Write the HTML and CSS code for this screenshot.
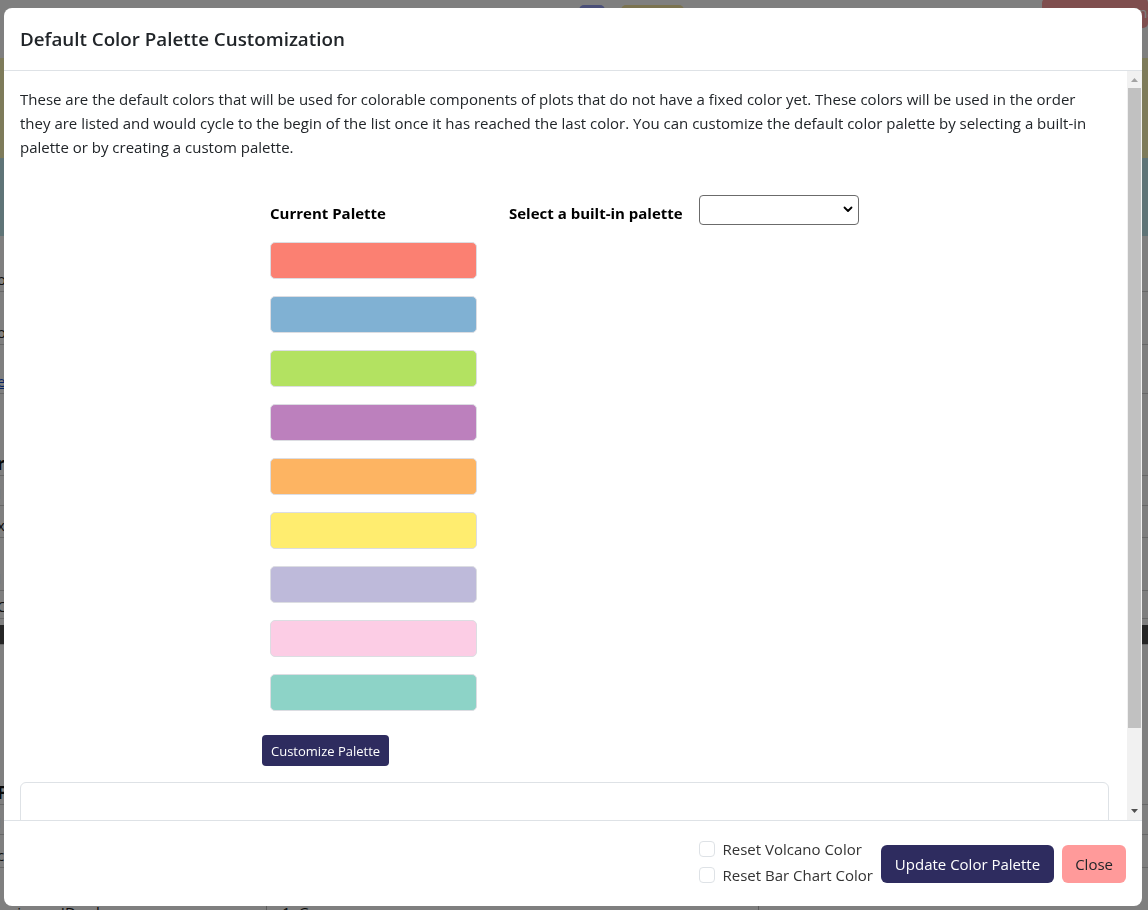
FILE: index.html
```html
<!DOCTYPE html>
<html lang="en">
<head>
<meta charset="utf-8">
<title>Default Color Palette Customization</title>
<link rel="stylesheet" href="styles.css">
</head>
<body>
<div class="page">
  <div class="page-top">
    <span class="pill pill-blue"></span>
    <span class="pill pill-tan"></span>
    <span class="pill pill-red">Formatting Enabled</span>
  </div>
  <div class="band band-tan"></div>
  <div class="band band-teal"></div>
  <div class="page-rows">
    <div class="prow">o</div>
    <div class="prow">o</div>
    <div class="prow link">e</div>
    <div class="prow bold">r</div>
    <div class="prow orange">I</div>
    <div class="prow">x</div>
    <div class="prow orange">I</div>
    <div class="prow">C</div>
    <div class="prow dark"></div>
    <div class="prow bold">F</div>
    <div class="prow orange">I</div>
    <div class="prow">c</div>
  </div>
  <div class="page-last">
    <span class="cell-a">primary ID column</span>
    <span class="cell-b">1. Gene</span>
    <span class="cell-c"></span>
  </div>
</div>

<div class="backdrop"></div>

<div class="modal">
  <div class="modal-content">
    <div class="modal-header">
      <h5 class="modal-title">Default Color Palette Customization</h5>
    </div>
    <div class="modal-body">
      <div class="body-scroll">
        <p class="intro">These are the default colors that will be used for colorable components of plots that do not have a fixed color yet. These colors will be used in the order they are listed and would cycle to the begin of the list once it has reached the last color. You can customize the default color palette by selecting a built-in palette or by creating a custom palette.</p>

        <div class="palette-row">
          <div class="current-col">
            <div class="col-label">Current Palette</div>
            <div class="swatches">
              <div class="swatch" style="background:#fb8072"></div>
              <div class="swatch" style="background:#80b1d3"></div>
              <div class="swatch" style="background:#b3e261"></div>
              <div class="swatch" style="background:#bc80bd"></div>
              <div class="swatch" style="background:#fdb462"></div>
              <div class="swatch" style="background:#ffed6f"></div>
              <div class="swatch" style="background:#bebada"></div>
              <div class="swatch" style="background:#fccde5"></div>
              <div class="swatch" style="background:#8dd3c7"></div>
            </div>
            <button class="btn-customize" type="button">Customize Palette</button>
          </div>
          <div class="builtin-col">
            <label class="col-label" for="builtin">Select a built-in palette</label>
            <div class="select-wrap">
              <select id="builtin" class="select"><option></option></select>
              <svg class="chev" width="10" height="7" viewBox="0 0 10 7"><path d="M1.5 1.5 L5 5 L8.5 1.5" fill="none" stroke="#000" stroke-width="1.8" stroke-linecap="round" stroke-linejoin="round"/></svg>
            </div>
          </div>
        </div>

        <div class="custom-box"></div>
      </div>
      <div class="vscroll" aria-hidden="true">
        <div class="sb-btn">
          <svg width="7" height="4" viewBox="0 0 7 4"><path d="M0 4 L3.5 0 L7 4 Z" fill="#a3a3a3"/></svg>
        </div>
        <div class="sb-thumb"></div>
        <div class="sb-btn sb-down">
          <svg width="7" height="4" viewBox="0 0 7 4"><path d="M0 0 L7 0 L3.5 4 Z" fill="#505050"/></svg>
        </div>
      </div>
    </div>
    <div class="modal-footer">
      <div class="checks">
        <label class="check"><span class="box"></span>Reset Volcano Color</label>
        <label class="check"><span class="box"></span>Reset Bar Chart Color</label>
      </div>
      <button class="btn btn-update" type="button">Update Color Palette</button>
      <button class="btn btn-close" type="button">Close</button>
    </div>
  </div>
</div>
</body>
</html>
```
FILE: styles.css
```css
* { box-sizing: border-box; }
html, body { margin: 0; padding: 0; }
body {
  font-family: "Open Sans", "Noto Sans", sans-serif;
  font-size: 15px;
  color: #212529;
  background: #fff;
  overflow: hidden;
  height: 910px;
}

/* background page (dimmed by backdrop) */
.page {
  height: 920px;
  display: flex;
  flex-direction: column;
}
.page-top {
  height: 58px;
  flex: none;
  display: flex;
  align-items: flex-start;
  padding-left: 579px;
}
.pill { display: block; height: 24px; border-radius: 5px; margin-top: 5px; }
.pill-blue { width: 26px; background: #949ef0; }
.pill-tan { width: 63px; margin-left: 16px; background: #f6e6a0; }
.pill-red {
  margin-left: auto;
  margin-top: -2px;
  width: 106px;
  height: 30px;
  background: #ff9c9c;
  color: #ffffff;
  font-size: 15px;
  line-height: 20px;
  padding: 4px 0 0 7px;
  white-space: nowrap;
  overflow: hidden;
}
.band { flex: none; }
.band-tan { height: 100px; background: #fcf6b4; }
.band-teal { height: 78px; background: #bee8ee; }
.page-rows { display: flex; flex-direction: column; flex: none; }
.prow {
  height: 26px;
  line-height: 26px;
  font-size: 15px;
  text-indent: -3px;
  color: #222;
  border-bottom: 1px solid #d0d0d0;
}
.prow:nth-child(1) { margin-top: 30px; }
.prow:nth-child(2) { margin-top: 27px; }
.prow:nth-child(3) { margin-top: 23px; color: #0d47c9; text-decoration: underline; }
.prow:nth-child(4) { margin-top: 56px; }
.prow:nth-child(5) { margin-top: 4px; }
.prow:nth-child(6) { margin-top: 6px; }
.prow:nth-child(7) { margin-top: 27px; }
.prow:nth-child(8) { margin-top: 2px; }
.prow:nth-child(9) { margin-top: 6px; }
.prow:nth-child(10) { margin-top: 134px; }
.prow:nth-child(11) { margin-top: 4px; }
.prow:nth-child(12) { margin-top: 7px; }
.prow.bold { font-weight: 700; font-size: 18px; color: #111; }
.prow.orange { color: #c07a00; }
.prow.dark { background: #4a4a4a; height: 20px; }
.page-last {
  margin-top: auto;
  height: 20px;
  display: flex;
  font-size: 15px;
  line-height: 24px;
  color: #111;
}
.cell-a { width: 267px; padding-left: 2px; border-right: 1px solid #bbb; }
.cell-b { width: 492px; padding-left: 15px; border-right: 1px solid #bbb; }

.backdrop {
  position: fixed;
  inset: 0;
  background: rgba(0, 0, 0, 0.5);
}

/* modal */
.modal {
  position: fixed;
  inset: 0;
  padding: 8px 6px 4px 4px;
  display: flex;
}
.modal-content {
  flex: 1;
  display: flex;
  flex-direction: column;
  background: #fff;
  border-radius: 8px;
  overflow: hidden;
}
.modal-header {
  flex: none;
  padding: 16px 16px;
  border-bottom: 1px solid #dee2e6;
}
.modal-title {
  margin: 0;
  font-size: 18.8px;
  font-weight: 600;
  line-height: 30px;
  color: #212529;
}
.modal-body {
  flex: 1;
  min-height: 0;
  display: flex;
}
.body-scroll {
  flex: 1;
  min-width: 0;
  overflow: hidden;
  padding: 16px;
}

/* drawn scrollbar */
.vscroll {
  flex: none;
  width: 15px;
  background: #f1f1f1;
  display: flex;
  flex-direction: column;
}
.sb-btn {
  flex: none;
  height: 17px;
  display: flex;
  align-items: center;
  justify-content: center;
}
.sb-btn svg { display: block; }
.sb-thumb {
  flex: none;
  height: 640px;
  margin: 0 1px 0 1px;
  background: #c1c1c1;
}
.sb-down { margin-top: auto; height: 18px; }

.intro {
  margin: 0 10px 16px 0;
  line-height: 24px;
  font-size: 15px;
  color: #212529;
}

.palette-row {
  display: flex;
  align-items: flex-start;
  padding-top: 20px;
  padding-left: 242px;
  gap: 24px;
}
.current-col {
  width: 223px;
  flex: none;
  display: flex;
  flex-direction: column;
  align-items: flex-start;
}
.col-label {
  font-weight: 700;
  font-size: 15px;
  line-height: 22px;
  color: #000;
  margin-top: 7px;
}
.current-col .col-label { margin-left: 8px; }
.swatches {
  display: flex;
  flex-direction: column;
  gap: 17px;
  margin: 18px 0 0 8px;
}
.swatch {
  width: 207px;
  height: 37px;
  border: 1px solid #dcdde2;
  border-radius: 5px;
}
.btn-customize {
  margin-top: 24px;
  height: 31px;
  padding: 0 9px;
  font-family: "Open Sans", sans-serif;
  font-size: 13px;
  color: #fff;
  background: #2e2c5f;
  border: 0;
  border-radius: 4px;
}
.builtin-col {
  display: flex;
  align-items: flex-start;
  gap: 16px;
}
.select-wrap { position: relative; }
.select {
  display: block;
  width: 160px;
  height: 30px;
  appearance: none;
  -webkit-appearance: none;
  background: #fff;
  border: 1px solid #6b6b6b;
  border-radius: 4px;
  font-family: "Open Sans", sans-serif;
  font-size: 15px;
}
.chev {
  position: absolute;
  right: 6px;
  top: 11px;
  pointer-events: none;
}

.custom-box {
  margin-top: 16px;
  margin-right: 2px;
  height: 115px;
  border: 1px solid #dee2e6;
  border-radius: 6px;
}

/* footer */
.modal-footer {
  flex: none;
  height: 86px;
  border-top: 1px solid #dee2e6;
  display: flex;
  align-items: center;
  justify-content: flex-end;
  padding: 0 16px 0 16px;
  gap: 8px;
}
.checks { display: flex; flex-direction: column; margin: 0 0 3px 0; }
.check {
  display: flex;
  align-items: center;
  gap: 8px;
  line-height: 26px;
  font-size: 15px;
  color: #333;
}
.box {
  width: 16px;
  height: 16px;
  border: 1px solid #dee2e6;
  border-radius: 4px;
  background: #fff;
}
.btn {
  height: 38px;
  padding: 0 14px;
  border: 0;
  border-radius: 6px;
  font-family: "Open Sans", sans-serif;
  font-size: 15px;
}
.btn-update { background: #2e2c5f; color: #fff; }
.btn-close { background: #ff9a9a; color: #212529; padding: 0 13px; }
```
